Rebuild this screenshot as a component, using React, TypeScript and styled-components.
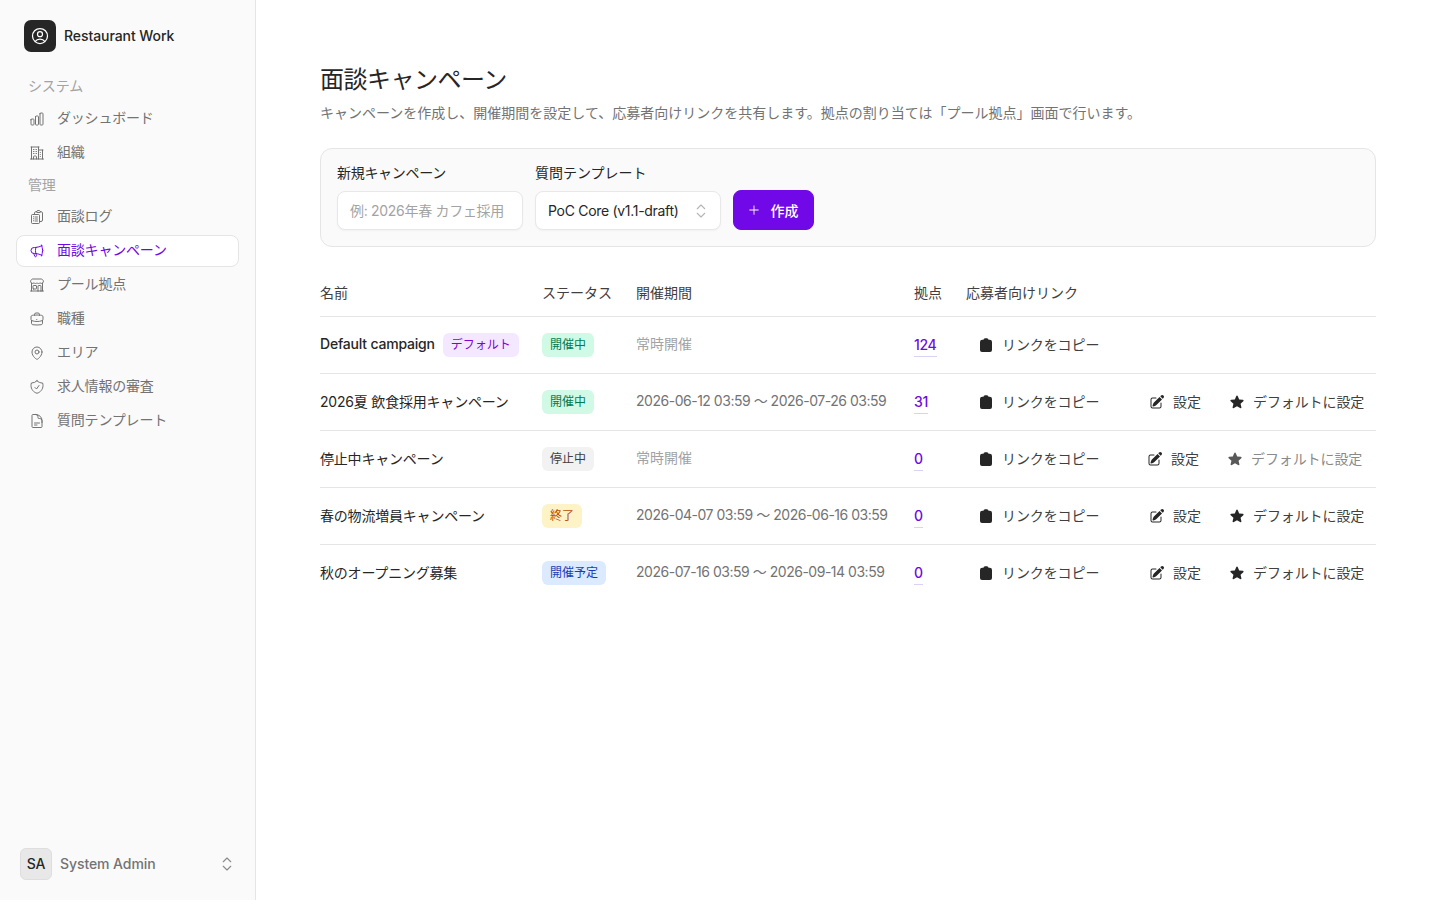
import React from "react";
import styled, { createGlobalStyle } from "styled-components";
import { ChevronsUpDown } from "lucide-react";
import {
  HiOutlineChartBar,
  HiOutlineBuildingOffice2,
  HiOutlineClipboardDocumentList,
  HiOutlineMegaphone,
  HiOutlineBuildingStorefront,
  HiOutlineBriefcase,
  HiOutlineMapPin,
  HiOutlineShieldCheck,
  HiOutlineDocumentText,
  HiOutlineUserCircle,
  HiPlus,
  HiPencilSquare,
  HiStar,
} from "react-icons/hi2";

const GlobalStyle = createGlobalStyle`
  html, body {
    margin: 0;
    padding: 0;
    height: 100%;
    background: #fff;
    color: #262626;
    font-family: Inter, "Noto Sans CJK JP", "Liberation Sans", sans-serif;
    font-size: 14px;
  }
  #root { height: 100%; }
  * { box-sizing: border-box; }
`;

const Shell = styled.div`
  display: flex;
  height: 900px;
  overflow: hidden;
`;

const Sidebar = styled.aside`
  width: 256px;
  flex: none;
  display: flex;
  flex-direction: column;
  background: #fafafa;
  border-right: 1px solid #e5e5e5;
  padding: 20px 16px;
`;

const Brand = styled.div`
  display: flex;
  align-items: center;
  gap: 8px;
  padding-left: 8px;
  height: 32px;
  margin-bottom: 20px;
  font-weight: 500;
  color: #262626;
`;

const BrandName = styled.span`
  padding-bottom: 2px;
  letter-spacing: -0.07px;
`;

const BrandMark = styled.div`
  width: 32px;
  height: 32px;
  border-radius: 7px;
  background: #262626;
  color: #fff;
  display: flex;
  align-items: center;
  justify-content: center;
  font-size: 20px;
`;

const GroupLabel = styled.div<{ $first?: boolean }>`
  height: ${(p) => (p.$first ? 31 : 30)}px;
  padding: 0 0 ${(p) => (p.$first ? 6 : 4)}px 12px;
  display: flex;
  align-items: center;
  color: #a3a3a3;
  font-size: 14px;
  letter-spacing: -0.15px;
`;

const NavItem = styled.div<{ $active?: boolean }>`
  height: 32px;
  margin-bottom: 2px;
  display: flex;
  align-items: center;
  gap: 12px;
  padding: 0 0 4px 12px;
  border-radius: 8px;
  font-size: 14px;
  letter-spacing: -0.2px;
  border: 1px solid ${(p) => (p.$active ? "#e5e5e5" : "transparent")};
  background: ${(p) => (p.$active ? "#fff" : "transparent")};
  color: ${(p) => (p.$active ? "#7008e7" : "#737373")};

  svg {
    font-size: 16px;
    flex: none;
    margin-top: 3px;
    color: ${(p) => (p.$active ? "#7008e7" : "#737373")};
  }
`;

const SideFooter = styled.div`
  margin-top: auto;
  height: 32px;
  display: flex;
  align-items: center;
  padding: 0 4px;
  gap: 8px;
  color: #737373;
  font-weight: 500;
  letter-spacing: -0.08px;

  svg {
    margin-left: auto;
    margin-right: -1px;
    color: #8a8a8a;
  }
`;

const FooterName = styled.span`
  padding-bottom: 2px;
`;

const Avatar = styled.div`
  width: 32px;
  height: 32px;
  border-radius: 6px;
  background: #e8e8e8;
  border: 1px solid #dedede;
  padding-bottom: 2px;
  color: #262626;
  display: flex;
  align-items: center;
  justify-content: center;
  font-size: 14px;
  font-weight: 500;
`;

const Main = styled.main`
  flex: 1;
  padding: 64px 64px 0 64px;
`;

const Title = styled.h1`
  margin: 0;
  font-size: 24px;
  line-height: 32px;
  font-weight: 400;
  letter-spacing: -0.5px;
  color: #262626;
`;

const Subtitle = styled.p`
  margin: 7px 0 0;
  font-size: 14px;
  line-height: 20px;
  color: #737373;
`;

const CreateCard = styled.section`
  margin-top: 25px;
  height: 99px;
  border: 1px solid #e5e5e5;
  border-radius: 12px;
  background: #fafafa;
  padding: 14px 16px 16px;
  display: flex;
  align-items: flex-end;
  gap: 12px;
`;

const Field = styled.label<{ $tight?: boolean }>`
  display: flex;
  flex-direction: column;
  gap: 8px;
  font-size: 14px;
  line-height: 20px;
  letter-spacing: ${(p) => (p.$tight ? "-0.3px" : "0")};
  color: #262626;
`;

const Input = styled.div`
  width: 186px;
  height: 39px;
  border: 1px solid #e8e8e8;
  border-radius: 8px;
  background: #fff;
  color: #a3a3a3;
  display: flex;
  align-items: center;
  padding-left: 12px;
  white-space: nowrap;
  letter-spacing: -0.3px;
  box-shadow: 0 1px 2px rgba(0, 0, 0, 0.04);
`;

const Select = styled(Input)`
  color: #262626;
  justify-content: space-between;
  padding-right: 10px;

  svg {
    color: #b5b5b5;
  }
`;

const CreateButton = styled.button`
  width: 81px;
  height: 40px;
  border: 1px solid #7008e7;
  border-radius: 8px;
  background: #7008e7;
  color: #fff;
  font: inherit;
  display: flex;
  align-items: center;
  justify-content: center;
  gap: 10px;
  padding: 0 2px 0 0;
  font-weight: 500;

  svg {
    font-size: 14px;
  }
`;

const Table = styled.table`
  margin-top: 24px;
  width: 1056px;
  border-collapse: collapse;
  table-layout: fixed;
`;

const Th = styled.th`
  height: 45px;
  padding: 0 0 2px;
  text-align: left;
  font-weight: 400;
  font-size: 14px;
  color: #404040;
  border-bottom: 1px solid #e5e5e5;
  white-space: nowrap;
`;

const Row = styled.tr`
  height: 57px;
  border-bottom: 1px solid #e5e5e5;

  &:last-child {
    border-bottom: none;
  }
`;

const Td = styled.td`
  padding: 0;
  white-space: nowrap;
  font-size: 14px;
`;

const NameCell = styled.div<{ $strong?: boolean }>`
  display: flex;
  align-items: center;
  gap: 8px;
  color: #262626;
  font-weight: ${(p) => (p.$strong ? 500 : 400)};
  letter-spacing: -0.2px;
`;

const NameText = styled.span`
  padding-bottom: 2px;
`;

const Badge = styled.span<{ $tone: "green" | "gray" | "amber" | "blue" | "violet" }>`
  display: inline-flex;
  align-items: center;
  height: 24px;
  padding: 0 8px 2px;
  border-radius: 6px;
  font-size: 12px;
  font-weight: 400;
  letter-spacing: 0;
  color: ${(p) =>
    ({
      green: "#007a55",
      gray: "#404040",
      amber: "#bb4d00",
      blue: "#193cb8",
      violet: "#8200db",
    })[p.$tone]};
  background: ${(p) =>
    ({
      green: "#d0fae5",
      gray: "#f2f2f2",
      amber: "#fef3c6",
      blue: "#dbeafe",
      violet: "#f3e8ff",
    })[p.$tone]};
`;

const Period = styled.div<{ $muted?: boolean }>`
  padding-bottom: 4px;
  color: ${(p) => (p.$muted ? "#a3a3a3" : "#737373")};
  letter-spacing: ${(p) => (p.$muted ? "0" : "-0.48px")};
`;

const SiteLink = styled.a`
  color: #7008e7;
  font-weight: 500;
  letter-spacing: -0.3px;
  text-decoration: none;
  border-bottom: 1px solid #ddd0f7;
  padding-bottom: 3px;
`;

const Actions = styled.div`
  display: flex;
  align-items: center;
`;

const ActionButton = styled.button<{ $muted?: boolean; $width: number }>`
  width: ${(p) => p.$width}px;
  height: 32px;
  border: none;
  background: transparent;
  padding: 0 0 2px 12px;
  display: flex;
  align-items: center;
  gap: 8px;
  font: inherit;
  font-size: 14px;
  letter-spacing: -0.1px;
  white-space: nowrap;
  color: ${(p) => (p.$muted ? "#8a8a8a" : "#404040")};

  svg {
    flex: none;
    font-size: 16px;
    margin-top: 2px;
    color: ${(p) => (p.$muted ? "#595959" : "#262626")};
  }
`;

const Spacer = styled.div`
  flex: 1;
`;

const ClipboardIcon = () => (
  <svg width="1em" height="1em" viewBox="0 0 16 16" fill="currentColor">
    <path d="M5.5 2.8A1.6 1.6 0 0 1 7.1 1.2h1.8a1.6 1.6 0 0 1 1.6 1.6h1.3A2.2 2.2 0 0 1 14 5v8a2 2 0 0 1-2 2H4a2 2 0 0 1-2-2V5a2.2 2.2 0 0 1 2.2-2.2z" />
  </svg>
);

type Tone = "green" | "gray" | "amber" | "blue";

type Campaign = {
  name: string;
  isDefault?: boolean;
  status: string;
  tone: Tone;
  period: string;
  sites: number;
};

const campaigns: Campaign[] = [
  { name: "Default campaign", isDefault: true, status: "開催中", tone: "green", period: "常時開催", sites: 124 },
  { name: "2026夏 飲食採用キャンペーン", status: "開催中", tone: "green", period: "2026-06-12 03:59 〜 2026-07-26 03:59", sites: 31 },
  { name: "停止中キャンペーン", status: "停止中", tone: "gray", period: "常時開催", sites: 0 },
  { name: "春の物流増員キャンペーン", status: "終了", tone: "amber", period: "2026-04-07 03:59 〜 2026-06-16 03:59", sites: 0 },
  { name: "秋のオープニング募集", status: "開催予定", tone: "blue", period: "2026-07-16 03:59 〜 2026-09-14 03:59", sites: 0 },
];

const App: React.FC = () => (
  <Shell>
    <GlobalStyle />
    <Sidebar>
      <Brand>
        <BrandMark>
          <HiOutlineUserCircle />
        </BrandMark>
        <BrandName>Restaurant Work</BrandName>
      </Brand>
      <GroupLabel $first>システム</GroupLabel>
      <NavItem><HiOutlineChartBar />ダッシュボード</NavItem>
      <NavItem><HiOutlineBuildingOffice2 />組織</NavItem>
      <GroupLabel>管理</GroupLabel>
      <NavItem><HiOutlineClipboardDocumentList />面談ログ</NavItem>
      <NavItem $active><HiOutlineMegaphone />面談キャンペーン</NavItem>
      <NavItem><HiOutlineBuildingStorefront />プール拠点</NavItem>
      <NavItem><HiOutlineBriefcase />職種</NavItem>
      <NavItem><HiOutlineMapPin />エリア</NavItem>
      <NavItem><HiOutlineShieldCheck />求人情報の審査</NavItem>
      <NavItem><HiOutlineDocumentText />質問テンプレート</NavItem>
      <SideFooter>
        <Avatar>SA</Avatar>
        <FooterName>System Admin</FooterName>
        <ChevronsUpDown size={18} strokeWidth={1.5} />
      </SideFooter>
    </Sidebar>
    <Main>
      <Title>面談キャンペーン</Title>
      <Subtitle>
        キャンペーンを作成し、開催期間を設定して、応募者向けリンクを共有します。拠点の割り当ては「プール拠点」画面で行います。
      </Subtitle>
      <CreateCard>
        <Field $tight>
          新規キャンペーン
          <Input>例: 2026年春 カフェ採用</Input>
        </Field>
        <Field>
          質問テンプレート
          <Select>
            PoC Core (v1.1-draft)
            <ChevronsUpDown size={18} strokeWidth={1.5} />
          </Select>
        </Field>
        <CreateButton>
          <HiPlus />
          作成
        </CreateButton>
      </CreateCard>
      <Table>
        <colgroup>
          <col style={{ width: 222 }} />
          <col style={{ width: 94 }} />
          <col style={{ width: 278 }} />
          <col style={{ width: 52 }} />
          <col />
        </colgroup>
        <thead>
          <tr>
            <Th>名前</Th>
            <Th>ステータス</Th>
            <Th>開催期間</Th>
            <Th>拠点</Th>
            <Th>応募者向けリンク</Th>
          </tr>
        </thead>
        <tbody>
          {campaigns.map((c) => (
            <Row key={c.name}>
              <Td>
                <NameCell $strong={c.isDefault}>
                  <NameText>{c.name}</NameText>
                  {c.isDefault && <Badge $tone="violet">デフォルト</Badge>}
                </NameCell>
              </Td>
              <Td>
                <Badge $tone={c.tone}>{c.status}</Badge>
              </Td>
              <Td>
                <Period $muted={c.period === "常時開催"}>{c.period}</Period>
              </Td>
              <Td>
                <SiteLink>{c.sites}</SiteLink>
              </Td>
              <Td>
                <Actions>
                  <ActionButton $width={145}>
                    <ClipboardIcon />
                    リンクをコピー
                  </ActionButton>
                  <Spacer />
                  {!c.isDefault && (
                    <>
                      <ActionButton $width={80}>
                        <HiPencilSquare />
                        設定
                      </ActionButton>
                      <ActionButton $width={c.status === "停止中" ? 161 : 159} $muted={c.status === "停止中"}>
                        <HiStar />
                        デフォルトに設定
                      </ActionButton>
                    </>
                  )}
                </Actions>
              </Td>
            </Row>
          ))}
        </tbody>
      </Table>
    </Main>
  </Shell>
);

export default App;
